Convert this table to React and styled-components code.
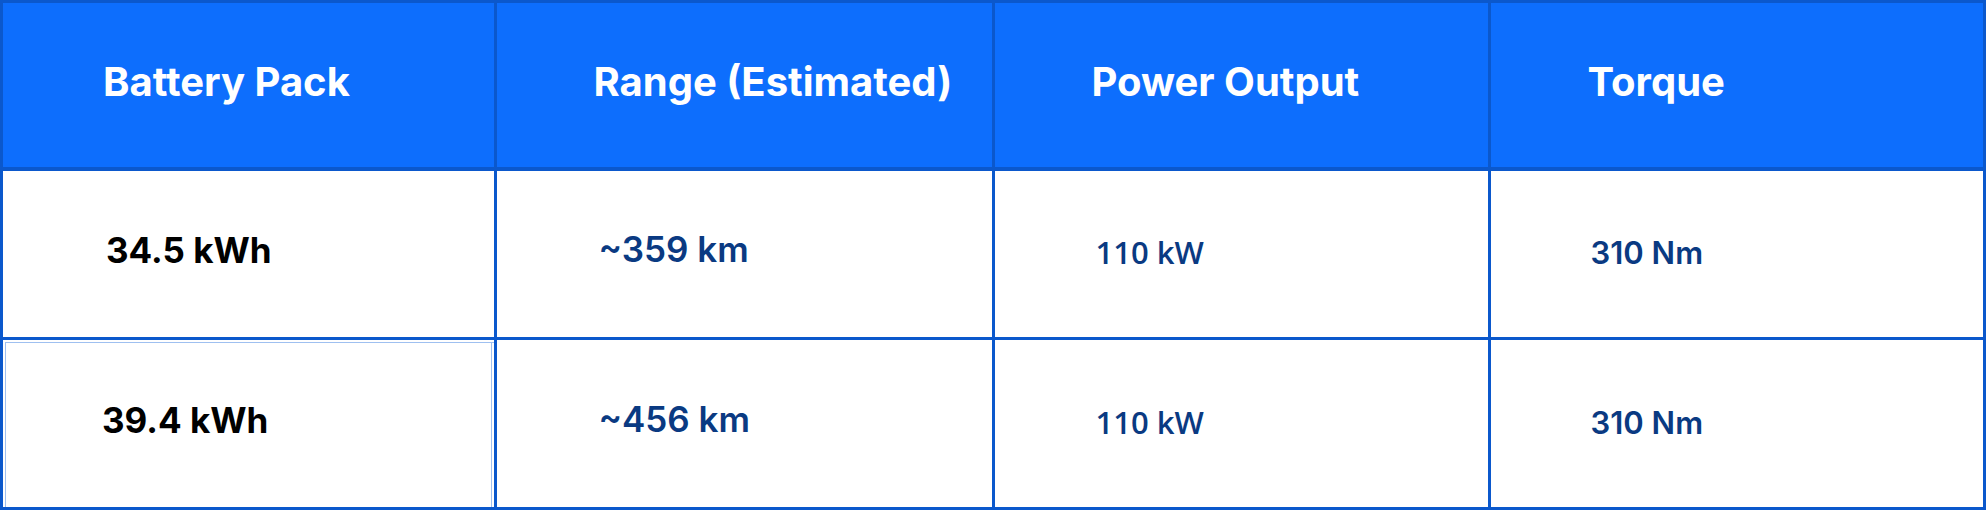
import styled, { createGlobalStyle } from "styled-components";

const GlobalStyle = createGlobalStyle`
  html, body {
    margin: 0;
    padding: 0;
    background: #ffffff;
  }
  body {
    font-family: Inter, "Liberation Sans", sans-serif;
  }
`;

const Frame = styled.div`
  box-sizing: border-box;
  width: 1986px;
  height: 510px;
  border: 3px solid #0b58cc;
  overflow: hidden;
`;

const Table = styled.table`
  width: 100%;
  height: 100%;
  border-collapse: collapse;
  table-layout: fixed;
  border: hidden;
`;

const HeadRow = styled.tr`
  height: 166px;
  background-color: #0d6efd;
`;

const BodyRow = styled.tr`
  height: 169px;
`;

const HeadCell = styled.th`
  padding: 0 0 8px ${({ $pad }) => $pad}px;
  text-align: left;
  vertical-align: middle;
  color: #ffffff;
  font-size: 40px;
  font-weight: 700;
  border: 3px solid #0b58cc;
  border-bottom-width: 4px;
`;

const Cell = styled.td`
  padding: 0 0 ${({ $lift }) => $lift}px ${({ $pad }) => $pad}px;
  text-align: left;
  vertical-align: middle;
  border: 3px solid #0b58cc;
  font-weight: ${({ $first }) => ($first ? 700 : 600)};
  font-size: ${({ $size }) => $size}px;
  color: ${({ $first }) => ($first ? "#000000" : "#0a3a82")};
  font-family: ${({ $alt }) =>
    $alt ? '"Open Sans", "Liberation Sans", sans-serif' : 'Inter, "Liberation Sans", sans-serif'};
  box-shadow: ${({ $inset }) =>
    $inset ? "inset 2px 2px 0 #ffffff, inset 3px 3px 0 #9fc0f0, inset -2px 0 0 #ffffff, inset -3px 0 0 #9fc0f0" : "none"};
`;

const columns = [
  { title: "Battery Pack", width: 492, pad: 100 },
  { title: "Range (Estimated)", width: 498, pad: 97 },
  { title: "Power Output", width: 496, pad: 97 },
  { title: "Torque", width: 494, pad: 97 },
];

const rows = [
  ["34.5 kWh", "~359 km", "110 kW", "310 Nm"],
  ["39.4 kWh", "~456 km", "110 kW", "310 Nm"],
];

export default function App() {
  return (
    <>
      <GlobalStyle />
      <Frame>
        <Table>
          <colgroup>
            {columns.map((c) => (
              <col key={c.title} style={{ width: c.width }} />
            ))}
          </colgroup>
          <thead>
            <HeadRow>
              {columns.map((c) => (
                <HeadCell key={c.title} $pad={c.pad}>
                  {c.title}
                </HeadCell>
              ))}
            </HeadRow>
          </thead>
          <tbody>
            {rows.map((r, i) => (
              <BodyRow key={i}>
                <Cell
                  $first
                  $size={35}
                  $pad={i === 1 ? 99 : 103}
                  $lift={7}
                  $inset={i === 1}
                >
                  {r[0]}
                </Cell>
                <Cell $size={35} $pad={102} $lift={9}>
                  {r[1]}
                </Cell>
                <Cell $size={31} $pad={101} $lift={3} $alt>
                  {r[2]}
                </Cell>
                <Cell $size={31} $pad={100} $lift={2}>
                  {r[3]}
                </Cell>
              </BodyRow>
            ))}
          </tbody>
        </Table>
      </Frame>
    </>
  );
}
